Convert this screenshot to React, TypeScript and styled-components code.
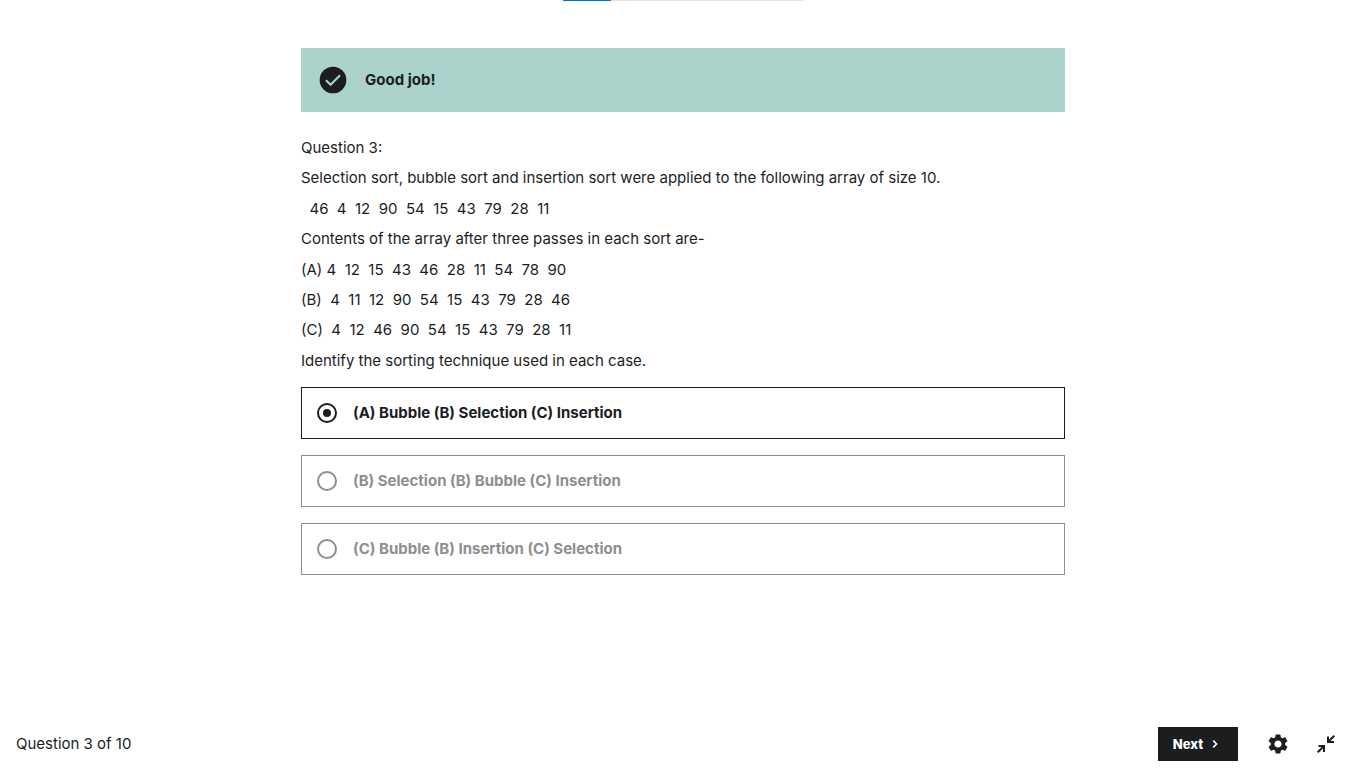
import React, { useState } from 'react';
import styled, { createGlobalStyle } from 'styled-components';

const ink = '#1c1d1f';

const GlobalStyle = createGlobalStyle`
  *, *::before, *::after { box-sizing: border-box; }
  body {
    margin: 0;
    background: #fff;
    color: ${ink};
    font-family: Inter, Roboto, sans-serif;
    font-size: 15px;
    line-height: 22px;
  }
`;

const Page = styled.div`
  min-height: 100vh;
  display: flex;
  flex-direction: column;
`;

const Progress = styled.div`
  width: 241px;
  height: 1px;
  margin: 0 auto;
  background: #e4e4e4;
`;

const ProgressFill = styled.div`
  height: 100%;
  background: #0076d6;
`;

const Content = styled.main`
  flex: 1;
  width: 100%;
  max-width: 764px;
  margin: 0 auto;
  padding-top: 47px;
`;

const Banner = styled.div`
  display: flex;
  align-items: center;
  gap: 16px;
  height: 64px;
  padding: 0 16px;
  background: #acd2cc;
  font-weight: 700;
`;

const Prompt = styled.section`
  display: flex;
  flex-direction: column;
  gap: 9px;
  margin: 25px 0 15px;
`;

const PromptGroup = styled.div`
  display: flex;
  flex-direction: column;
  gap: 8px;
`;

const Line = styled.p`
  margin: 0;
  white-space: pre-wrap;
`;

const Options = styled.form`
  display: flex;
  flex-direction: column;
  gap: 16px;
`;

const Option = styled.label<{ $selected: boolean }>`
  display: flex;
  align-items: center;
  gap: 16px;
  height: 52px;
  padding: 0 15px;
  border: 1px solid ${p => (p.$selected ? ink : '#8e8e8f')};
  color: ${p => (p.$selected ? ink : '#8e8e8f')};
  font-weight: 700;
`;

const Radio = styled.input`
  appearance: none;
  display: grid;
  place-items: center;
  flex: none;
  width: 20px;
  height: 20px;
  margin: 0;
  border: 2px solid currentColor;
  border-radius: 50%;
  color: inherit;

  &:checked::before {
    content: '';
    width: 8px;
    height: 8px;
    border-radius: 50%;
    background: currentColor;
  }
`;

const Footer = styled.footer`
  display: flex;
  align-items: center;
  justify-content: space-between;
  height: 48px;
  padding: 0 16px;
`;

const Status = styled.span`
  line-height: 24px;
`;

const Actions = styled.div`
  display: flex;
  align-items: center;
`;

const NextButton = styled.button`
  display: flex;
  align-items: center;
  justify-content: center;
  gap: 4px;
  width: 80px;
  height: 34px;
  margin-right: 16px;
  padding: 0;
  border: 0;
  background: ${ink};
  color: #fff;
  font: inherit;
  font-size: 13px;
  font-weight: 800;
`;

const IconButton = styled.button`
  display: grid;
  place-items: center;
  width: 48px;
  height: 48px;
  padding: 0;
  border: 0;
  background: none;
  color: ${ink};
`;

const groups = [
  [
    'Question 3:',
    'Selection sort, bubble sort and insertion sort were applied to the following array of size 10.',
  ],
  [
    '\u00a0 46\u00a0 4\u00a0 12\u00a0 90\u00a0 54\u00a0 15\u00a0 43\u00a0 79\u00a0 28\u00a0 11',
    'Contents of the array after three passes in each sort are-',
  ],
  [
    '(A) 4\u00a0 12\u00a0 15\u00a0 43\u00a0 46\u00a0 28\u00a0 11\u00a0 54\u00a0 78\u00a0 90',
    '(B)\u00a0 4\u00a0 11\u00a0 12\u00a0 90\u00a0 54\u00a0 15\u00a0 43\u00a0 79\u00a0 28\u00a0 46',
    '(C)\u00a0 4\u00a0 12\u00a0 46\u00a0 90\u00a0 54\u00a0 15\u00a0 43\u00a0 79\u00a0 28\u00a0 11',
  ],
  ['Identify the sorting technique used in each case.'],
];

const options = [
  '(A) Bubble (B) Selection (C) Insertion',
  '(B) Selection (B) Bubble (C) Insertion',
  '(C) Bubble (B) Insertion (C) Selection',
];

const SuccessIcon = () => (
  <svg width="32" height="32" viewBox="0 0 24 24" fill="none" aria-hidden="true">
    <circle cx="12" cy="12" r="10" fill="currentColor" />
    <path d="M6.700 12.200 10.200 15.600 17.300 8.500" stroke="#acd2cc" strokeWidth="1.600" />
  </svg>
);

const ChevronIcon = () => (
  <svg width="16" height="16" viewBox="0 0 24 24" fill="none" stroke="currentColor" strokeWidth="2.400" aria-hidden="true">
    <path d="M9.300 7l5 5-5 5" />
  </svg>
);

const SettingsIcon = () => (
  <svg width="24" height="24" viewBox="0 0 24 24" fill="currentColor" aria-hidden="true">
    <path d="M19.140 12.940c.04-.3.06-.61.06-.94 0-.32-.02-.64-.07-.94l2.030-1.580c.18-.14.23-.41.12-.61l-1.920-3.320c-.12-.22-.37-.29-.59-.22l-2.390.960c-.5-.38-1.030-.7-1.620-.94l-.36-2.540c-.04-.24-.24-.41-.48-.41h-3.840c-.24 0-.43.17-.47.41l-.36 2.540c-.59.24-1.130.57-1.620.940l-2.390-.960c-.22-.08-.47 0-.59.220L2.740 8.870c-.12.21-.08.47.12.61l2.030 1.580c-.05.3-.09.63-.09.940s.02.640.070.940l-2.030 1.580c-.18.140-.23.410-.12.610l1.920 3.320c.12.220.37.290.59.220l2.390-.960c.5.380 1.030.7 1.620.940l.36 2.540c.05.240.24.410.48.410h3.840c.24 0 .44-.17.47-.41l.36-2.540c.59-.24 1.130-.56 1.620-.94l2.390.960c.22.080.47 0 .59-.22l1.920-3.320c.12-.22.07-.47-.12-.61l-2.010-1.580zM12 15.600c-1.980 0-3.600-1.620-3.600-3.600s1.620-3.600 3.600-3.600 3.600 1.620 3.600 3.600-1.620 3.600-3.600 3.600z" />
  </svg>
);

const CollapseIcon = () => (
  <svg width="24" height="24" viewBox="0 0 24 24" fill="none" stroke="currentColor" strokeWidth="2" aria-hidden="true">
    <path d="M20.300 3.700 14 10M14 4.500V10h6M3.700 20.300 10 14M4.500 14H10v6" />
  </svg>
);

export default function App() {
  const [selected, setSelected] = useState(0);
  return (
    <Page>
      <GlobalStyle />
      <Progress role="progressbar" aria-label="Quiz progress" aria-valuenow={20} aria-valuemin={0} aria-valuemax={100}>
        <ProgressFill style={{ width: '20%' }} />
      </Progress>
      <Content>
        <Banner role="status">
          <SuccessIcon />
          Good job!
        </Banner>
        <Prompt>
          {groups.map((lines, i) => (
            <PromptGroup key={i}>
              {lines.map(line => (
                <Line key={line}>{line}</Line>
              ))}
            </PromptGroup>
          ))}
        </Prompt>
        <Options>
          {options.map((text, i) => (
            <Option key={text} $selected={i === selected}>
              <Radio type="radio" name="answer" checked={i === selected} onChange={() => setSelected(i)} />
              {text}
            </Option>
          ))}
        </Options>
      </Content>
      <Footer>
        <Status>Question 3 of 10</Status>
        <Actions>
          <NextButton type="button">
            Next
            <ChevronIcon />
          </NextButton>
          <IconButton type="button" aria-label="Settings">
            <SettingsIcon />
          </IconButton>
          <IconButton type="button" aria-label="Exit expanded view">
            <CollapseIcon />
          </IconButton>
        </Actions>
      </Footer>
    </Page>
  );
}
